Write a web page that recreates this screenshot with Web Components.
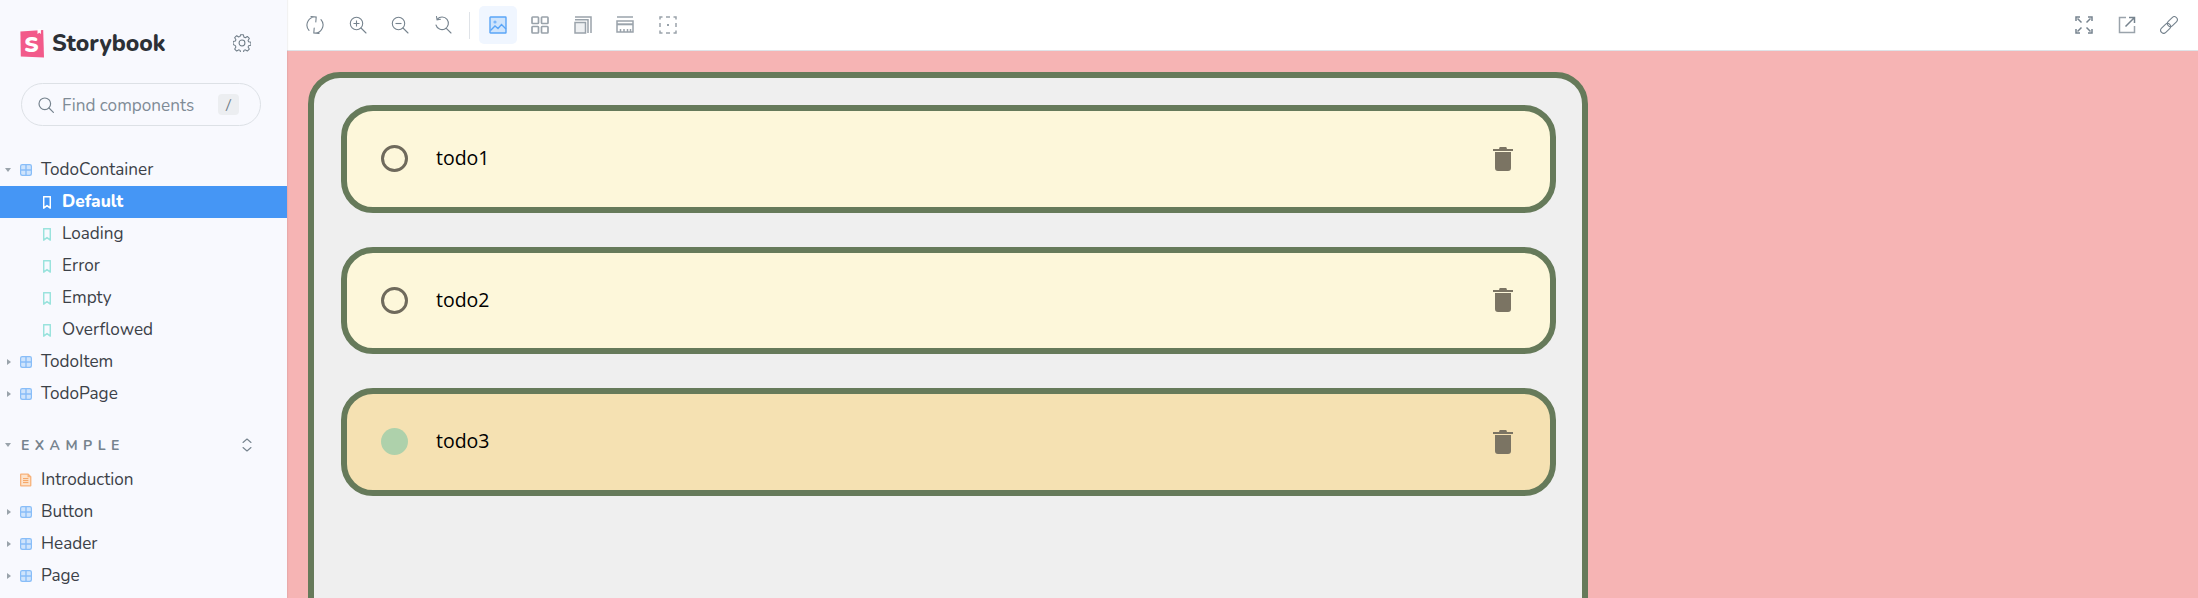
<!doctype html>
<html><head><meta charset="utf-8">
<style>
html,body{margin:0;height:598px;overflow:hidden;background:#fff;font-family:"Lato","Noto Sans",sans-serif}
</style></head>
<body>
<sb-app>
  <sb-sidebar slot="side">
    <sb-row kind="comp" caret="down">TodoContainer</sb-row>
    <sb-row kind="story" selected>Default</sb-row>
    <sb-row kind="story">Loading</sb-row>
    <sb-row kind="story">Error</sb-row>
    <sb-row kind="story">Empty</sb-row>
    <sb-row kind="story">Overflowed</sb-row>
    <sb-row kind="comp" caret="right">TodoItem</sb-row>
    <sb-row kind="comp" caret="right">TodoPage</sb-row>
    <sb-group>EXAMPLE</sb-group>
    <sb-row kind="doc">Introduction</sb-row>
    <sb-row kind="comp" caret="right">Button</sb-row>
    <sb-row kind="comp" caret="right">Header</sb-row>
    <sb-row kind="comp" caret="right">Page</sb-row>
  </sb-sidebar>
  <sb-toolbar slot="bar"></sb-toolbar>
  <todo-list slot="canvas">
    <todo-item>todo1</todo-item>
    <todo-item>todo2</todo-item>
    <todo-item done>todo3</todo-item>
  </todo-list>
</sb-app>
<script>
const def=(name,css,html,init)=>{
  customElements.define(name,class extends HTMLElement{
    constructor(){super();const r=this.attachShadow({mode:'open'});
      r.innerHTML=`<style>${css}</style>${typeof html==='function'?html(this):html}`;}
    connectedCallback(){if(init)init(this)}
  });
};
def('sb-app',`
:host{display:grid;grid-template-columns:287px 1fr;grid-template-rows:51px 1fr;width:2198px;height:598px;overflow:hidden}
.s{grid-row:1/3;min-height:0;overflow:hidden;position:relative;z-index:1;box-shadow:1px 0 1px rgba(0,0,0,.05)}
.b{min-width:0}.c{background:#f6b4b4;min-height:0;overflow:hidden;padding:21px 0 0 21px}
`,`<div class="s"><slot name="side"></slot></div><div class="b"><slot name="bar"></slot></div><div class="c"><slot name="canvas"></slot></div>`);

const logo=`<span class="logo"><svg width="24" height="29" viewBox="0 0 24 29"><path d="M0.4 2.6 23.2 1l.8 27.4-23.2-.9z" fill="#f25a8a"/><path d="M17.500 .2l3.400-.2v5l-1.600-1.200-1.800 1.300z" fill="#fff"/></svg><b>S</b></span>`;
const gear=`<svg width="18" height="18" viewBox="0 0 19 19" fill="none" stroke="#6e7b86" stroke-width="1.1" stroke-linejoin="round"><circle cx="9.5" cy="9.5" r="3.1"/><path d="M8 .8h3l.5 2.400 1.500.700 2.100-1.300 2.100 2.100-1.300 2.100.600 1.500 2.400.500v3l-2.400.500-.600 1.500 1.300 2.100-2.100 2.100-2.100-1.300-1.500.600-.500 2.400H8l-.500-2.400-1.500-.600-2.100 1.300-2.100-2.100 1.300-2.100-.600-1.500L.1 11V8l2.400-.500.600-1.500-1.300-2.100 2.100-2.100L6 3.100l1.500-.600z"/></svg>`;
def('sb-sidebar',`
:host{display:block;height:598px;background:#f8f9fe;color:#3c4148;font-family:"Nunito","Lato","Noto Sans",sans-serif}
.top{display:flex;align-items:center;justify-content:space-between;padding:29px 36px 0 20px;height:28px}
.brand{display:flex;align-items:center;gap:8px;font-weight:800;font-size:23px;color:#2c3036}
.logo{position:relative;display:block;width:24px;height:29px;flex:none}
.logo svg{display:block}
.logo b{position:absolute;inset:3px 1px 0 0;display:flex;align-items:center;justify-content:center;color:#fff;font-size:22px;line-height:26px;font-weight:900}
.search{margin:26px 0 0 21px;width:240px;height:43px;box-sizing:border-box;border:1px solid #dde1e6;border-radius:22px;display:flex;align-items:center;padding:0 21px 0 16px;gap:8px;color:#7f8b96;font-size:17.150px}
.search span{flex:1;position:relative;top:1px}
kbd{width:21px;height:21px;border-radius:4px;background:#eceef1;color:#6e7b86;font:15px/21px "Lato",sans-serif;text-align:center}
.tree{margin-top:28px}
`,`<div class="top"><div class="brand">${logo}<span>Storybook</span></div>${gear}</div>
<div class="search"><svg width="16" height="16" viewBox="0 0 16 16" fill="none" stroke="#76838e" stroke-width="1.2"><circle cx="6.8" cy="6.8" r="5.8"/><path d="M11 11l4.400 4.400" stroke-linecap="round"/></svg><span>Find components</span><kbd>/</kbd></div>
<div class="tree"><slot></slot></div>`);

const icons={
 comp:`<svg width="12" height="12" viewBox="0 0 12 12"><rect width="12" height="12" rx="2.2" fill="#88bdf8"/><path d="M1.200 5.300V2.400c0-.7.500-1.200 1.200-1.200h2.900v4.100zM6.700 1.200h2.900c.7 0 1.200.5 1.200 1.200v2.900H6.700zM1.200 6.700h4.100v4.100H2.400c-.7 0-1.200-.5-1.200-1.200zM6.700 6.700h4.100v2.900c0 .7-.5 1.200-1.200 1.200H6.700z" fill="#cfe4fc"/></svg>`,
 story:c=>`<svg width="8" height="13" viewBox="0 0 8 13" fill="none" stroke="${c}" stroke-width="1.5"><path d="M.7.7h6.600v11.400L4 9.600.7 12.100z" stroke-linejoin="round"/></svg>`,
 doc:`<svg width="12" height="14" viewBox="0 0 12 14"><path d="M1 .6h7.300L11.400 3.600V12.400a1 1 0 0 1-1 1H1a1 1 0 0 1-1-1V1.600a1 1 0 0 1 1-1z" fill="#f7b27a"/><path d="M1.300 1.800H7.500V4.200H10.100V12.200H1.300z" fill="#fde3cc"/><path d="M3 5.600h5.400M3 7.600h5.400M3 9.600h5.400" stroke="#f4a261" stroke-width="1"/></svg>`
};
def('sb-row',`
:host{display:block;height:32px;font-size:17.150px;line-height:32px;color:#3c4148}
:host([selected]){background:#4596f5;color:#fff;font-weight:800}
.r{display:flex;align-items:center;height:32px;padding-left:20px;position:relative}
:host([kind=story]) .r{padding-left:43px}
.ic{display:flex;width:21px;flex:none;align-items:center}
:host([kind=story]) .ic{width:19px}
.ca{position:absolute;left:6px;top:13px;width:0;height:0}
.down{border-left:3.500px solid transparent;border-right:3.500px solid transparent;border-top:4px solid #9aa3ab;left:5px;top:14px}
.right{border-top:3.500px solid transparent;border-bottom:3.500px solid transparent;border-left:4px solid #9aa3ab;left:7px;top:13px}
`,el=>{
 const k=el.getAttribute('kind'),c=el.getAttribute('caret'),sel=el.hasAttribute('selected');
 const i=k==='story'?icons.story(sel?'#fff':'#9ae3dd'):icons[k];
 return `<div class="r">${c?`<i class="ca ${c}"></i>`:''}<span class="ic">${i}</span><span><slot></slot></span></div>`;
});
def('sb-group',`
:host{display:flex;align-items:center;height:32px;margin:19px 0 3px;padding:0 35px 0 21px;justify-content:space-between;color:#76838e;font-weight:700;font-size:14px;letter-spacing:5.500px;position:relative}
i{position:absolute;left:5px;top:14px;width:0;height:0;border-left:3.500px solid transparent;border-right:3.500px solid transparent;border-top:4px solid #9aa3ab}
`,`<i></i><span><slot></slot></span><svg width="10" height="14" viewBox="0 0 10 14" fill="none" stroke="#76838e" stroke-width="1.1" stroke-linecap="round" stroke-linejoin="round"><path d="M1 4.500l4-3.500 4 3.500M1 9.500l4 3.500 4-3.500"/></svg>`);

const g='#76838e',l='#9aa3ab';
const mg=(inner)=>`<circle cx="7.500" cy="7.500" r="6.200"/><path d="M12 12l5 5" stroke-linecap="round"/>${inner}`;
const T={
 sync:`<path d="M3 14.300A8 8 0 0 1 10 1.100M5 .6l5.200.4-.4 5M15 3.700A8 8 0 0 1 8 16.900M13 17.400l-5.200-.4.400-5" stroke-linecap="round"/>`,
 zin:mg(`<path d="M7.500 4.500v6M4.500 7.500h6"/>`),
 zout:mg(`<path d="M4.500 7.500h6"/>`),
 zreset:`<path d="M3.300 3.200A6.300 6.300 0 1 1 2 9M12.300 12.300l4.700 4.700" stroke-linecap="round"/><path d="M2.500.5l.6 3.300 3.400-.5" stroke-linecap="round"/>`,
 img:`<rect x="1" y="1" width="16" height="16" rx=".5" stroke="#5aa5f7" stroke-width="1.400" fill="#cfe4fc"/><circle cx="6" cy="6" r="1.600" fill="#7ab6fa" stroke="none"/><path d="M1.500 14.500l4.500-4.500 3 2.500 3.500-4 4.500 4.500" stroke="#5aa5f7" stroke-width="1.400"/>`,
 grid:`<g stroke="${l}" stroke-width="1.700"><rect x="1" y="1" width="6.500" height="6.500" rx=".7"/><rect x="10.500" y="1" width="6.500" height="6.500" rx=".7"/><rect x="1" y="10.500" width="6.500" height="6.500" rx=".7"/><rect x="10.500" y="10.500" width="6.500" height="6.500" rx=".7"/></g>`,
 bg:`<g stroke="${l}" stroke-width="1.500"><path d="M1 3.800h13V17M1 1h16v16"/><rect x="1" y="6.500" width="10.500" height="10.500" fill="#eef0f2"/></g>`,
 rule:`<g stroke="${l}" stroke-width="1.500"><path d="M1 1h16"/><rect x="1" y="5" width="16" height="11" fill="#fff"/><path d="M1 8.300h16" stroke-width="2"/><path d="M4.500 16v-3M8 16v-3M11.500 16v-3M14.500 16v-3"/></g>`,
 out:`<g stroke="${l}" stroke-width="1.500"><path d="M1 3.500V1h2.500M7 1h4M14.500 1H17v2.500M17 7v4M17 14.500V17h-2.500M11 17H7M3.500 17H1v-2.500M1 11V7"/></g><circle cx="9" cy="9" r="1" fill="${g}" stroke="none"/>`,
 full:`<path d="M2.500 2.500l4 4M15.500 2.500l-4 4M2.500 15.500l4-4M15.500 15.500l-4-4" stroke="${g}" stroke-width="1.500"/><path d="M1 5V1h4M13 1h4v4M1 13v4h4M17 13v4h-4" stroke="${g}" stroke-width="1.500"/>`,
 ext:`<path d="M8 1.500H1.500v15h15V10" stroke="${l}" stroke-width="1.500"/><path d="M7.500 10.500L16 2M11 1.500h5.500V7" stroke="${g}" stroke-width="1.500"/>`,
 link:`<g transform="rotate(-45 9 9)"><rect x="-1.500" y="6" width="11.500" height="6" rx="3"/><rect x="8" y="6" width="11.500" height="6" rx="3"/></g>`
};
const tb=(n,a)=>`<button class="${a?'on':''}"><svg width="18" height="18" viewBox="0 0 18 18" fill="none" stroke="${g}" stroke-width="1.1">${T[n]}</svg></button>`;
def('sb-toolbar',`
:host{display:flex;height:51px;box-sizing:border-box;border-bottom:1px solid #dfe3e8;background:#fff;align-items:center;justify-content:space-between;padding:0 10px 0 9px}
div{display:flex;align-items:center;gap:4.500px}
button{all:unset;width:38px;height:38px;display:flex;align-items:center;justify-content:center;border-radius:5px}
.on{background:#f0f6ff}
hr{width:1px;height:27px;background:#dfe3e8;border:0;margin:0 4px 0 3px}
`,`<div>${tb('sync')}${tb('zin')}${tb('zout')}${tb('zreset')}<hr>${tb('img',1)}${tb('grid')}${tb('bg')}${tb('rule')}${tb('out')}</div><div>${tb('full')}${tb('ext')}${tb('link')}</div>`);

def('todo-list',`
:host{display:flex;flex-direction:column;gap:34px;width:1280px;height:800px;box-sizing:border-box;background:#efefef;border:6px solid #667a5a;border-radius:32px;padding:27px 26px 27px 27px}
`,`<slot></slot>`);
def('todo-item',`
:host{display:flex;align-items:center;flex:none;height:107.5px;box-sizing:border-box;background:#fdf7da;border:6px solid #667a5a;border-radius:32px;padding:0 37px 0 34px;color:#000;font:19.500px "Open Sans",sans-serif}
:host([done]){background:#f5e1b2}
.c{width:27px;height:27px;box-sizing:border-box;border:3px solid #6f6a5c;border-radius:50%;flex:none;margin-right:28px}
:host([done]) .c{background:#aed1ab;border:0}
.t{flex:1;position:relative;top:-1px}
`,`<div class="c"></div><div class="t"><slot></slot></div><svg width="20" height="24" viewBox="0 0 20 24" fill="#7b7463"><path d="M0 2h6l.7-2h6.600l.7 2h6v2H0zM2 5h16v16a3 3 0 0 1-3 3H5a3 3 0 0 1-3-3z"/></svg>`);
</script>
</body></html>
